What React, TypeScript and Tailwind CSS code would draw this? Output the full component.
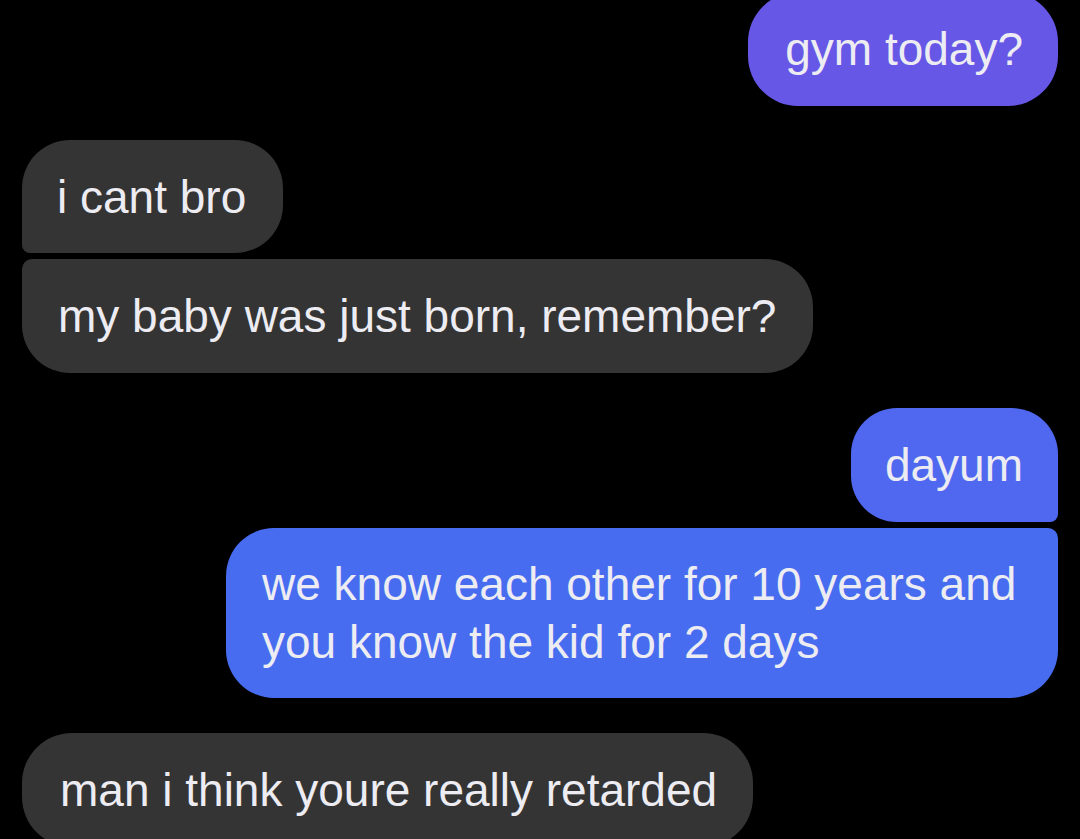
import React from "react";

const font = { fontFamily: '"Liberation Sans", Arial, sans-serif' };

export default function App() {
  return (
    <div
      className="w-[1080px] h-[839px] overflow-hidden bg-black flex flex-col px-[22px] text-[46px] leading-[58px] text-[#ececf2]"
      style={font}
    >
      <div className="self-end mt-[-8px] h-[114px] shrink-0 flex items-center pl-[37px] pr-[35px] rounded-[50px] bg-[#6757e6]">
        gym today?
      </div>

      <div className="self-start mt-[34px] h-[113px] shrink-0 flex items-center pl-[35px] pr-[37px] rounded-[48px] rounded-bl-[8px] bg-[#343434]">
        i cant bro
      </div>
      <div className="self-start mt-[6px] h-[114px] shrink-0 flex items-center pl-[36px] pr-[37px] rounded-[48px] rounded-tl-[10px] bg-[#343434]">
        my baby was just born, remember?
      </div>

      <div className="self-end mt-[35px] h-[114px] shrink-0 flex items-center pl-[34px] pr-[35px] rounded-[46px] rounded-br-[8px] bg-[#5068ef]">
        dayum
      </div>
      <div className="self-end mt-[6px] w-[832px] shrink-0 py-[27px] pl-[36px] pr-[30px] rounded-[48px] rounded-tr-[10px] bg-[#476cf0]">
        we know each other for 10 years and you know the kid for 2 days
      </div>

      <div className="self-start mt-[35px] h-[114px] shrink-0 flex items-center pl-[38px] pr-[36px] rounded-[50px] bg-[#343434]">
        man i think youre really retarded
      </div>
    </div>
  );
}
